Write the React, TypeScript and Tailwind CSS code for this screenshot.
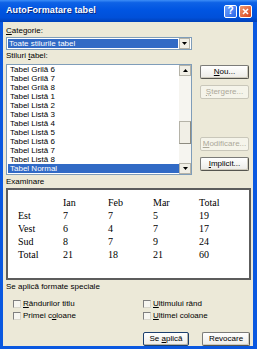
import React from "react";

const items = [
  "Tabel Grilă 6",
  "Tabel Grilă 7",
  "Tabel Grilă 8",
  "Tabel Listă 1",
  "Tabel Listă 2",
  "Tabel Listă 3",
  "Tabel Listă 4",
  "Tabel Listă 5",
  "Tabel Listă 6",
  "Tabel Listă 7",
  "Tabel Listă 8",
  "Tabel Normal",
];

const rows = [
  ["", "Ian", "Feb", "Mar", "Total"],
  ["Est", "7", "7", "5", "19"],
  ["Vest", "6", "4", "7", "17"],
  ["Sud", "8", "7", "9", "24"],
  ["Total", "21", "18", "21", "60"],
];

function Arrow({ up }: { up?: boolean }) {
  return (
    <svg width="5" height="3" viewBox="0 0 5 3" className={up ? "rotate-180" : ""}>
      <path d="M0 0h5L2.5 3z" fill="#000" />
    </svg>
  );
}

function Btn({
  children,
  disabled,
  def,
  className = "",
}: {
  children: React.ReactNode;
  disabled?: boolean;
  def?: boolean;
  className?: string;
}) {
  return (
    <div
      className={
        "h-[14px] flex items-center justify-center rounded-[2px] border leading-[10px] " +
        (disabled
          ? "border-[#c9c7ba] bg-[#f5f4ea] text-[#aca899] "
          : def
          ? "border-[#1c3f6e] bg-[linear-gradient(to_bottom,#ffffff,#ecebe6)] shadow-[inset_-1px_-1px_0_#b8b4a4] "
          : "border-[#7b7b78] border-r-[#55554f] border-b-[#55554f] bg-[linear-gradient(to_bottom,#ffffff,#ecebe6)] shadow-[inset_-1px_-1px_0_#cfcbbd] ") +
        className
      }
    >
      {children}
    </div>
  );
}

function Check({ children }: { children: React.ReactNode }) {
  return (
    <div className="flex items-center h-[12px]">
      <div className="w-[8px] h-[8px] border border-[#808080] border-r-[#d8d6cc] border-b-[#d8d6cc] bg-[#f7f6f1]" />
      <span className="ml-[2px] leading-[10px]">{children}</span>
    </div>
  );
}

export default function App() {
  return (
    <div className="w-[257px] h-[349px] bg-[#0a58e0] flex flex-col font-['Liberation_Sans',sans-serif] text-[8px] text-black overflow-hidden">
      {/* title bar */}
      <div className="h-[22px] shrink-0 flex items-center pl-[6px] pr-[5px] bg-[linear-gradient(to_bottom,#3d8ef7_0%,#0e62e6_12%,#0055e2_45%,#0050d9_80%,#0040b8_100%)]">
        <span className="flex-1 font-bold text-[9px] text-white tracking-[0.1px] [text-shadow:1px_1px_0_#0a2a80]">
          AutoFormatare tabel
        </span>
        <div className="w-[13px] h-[13px] rounded-[2px] border border-white bg-[linear-gradient(135deg,#6fa2ff,#2a66e8)] flex items-center justify-center text-white font-bold text-[10px] leading-[10px]">
          ?
        </div>
        <div className="ml-[2px] w-[13px] h-[13px] rounded-[2px] border border-white bg-[linear-gradient(135deg,#f09a70,#d8431a)] flex items-center justify-center">
          <svg width="7" height="7" viewBox="0 0 7 7">
            <path d="M1 1L6 6M6 1L1 6" stroke="#fff" strokeWidth="1.6" />
          </svg>
        </div>
      </div>

      {/* client */}
      <div className="flex-1 ml-[3px] mr-[4px] mb-[4px] bg-[#ece9d8] pl-[3px] pr-[2px] flex flex-col">
        <div className="flex">
          <div className="w-[186px] flex flex-col">
            <div className="mt-[4px] h-[10px] leading-[10px]">
              <u>C</u>ategorie:
            </div>
            <div className="mt-[1px] h-[13px] border border-[#7f9db9] bg-white flex items-center pl-[1px] pr-[1px]">
              <div className="flex-1 h-[9px] bg-[#316ac5] text-white leading-[9px] pl-[1px]">
                Toate stilurile tabel
              </div>
              <div className="ml-[1px] w-[11px] h-[11px] border border-[#b5b3a8] bg-[#f1efe6] flex items-center justify-center">
                <Arrow />
              </div>
            </div>
            <div className="mt-[1px] h-[10px] leading-[10px]">
              Stiluri <u>t</u>abel:
            </div>
            <div className="mt-[3px] h-[111px] border border-[#7f9db9] bg-white flex">
              <div className="flex-1 flex flex-col pl-[1px]">
                {items.map((it, i) => (
                  <div
                    key={it}
                    className={
                      "h-[9px] leading-[9px] pl-[2px] whitespace-nowrap " +
                      (i === items.length - 1 ? "bg-[#316ac5] text-white" : "")
                    }
                  >
                    {it}
                  </div>
                ))}
              </div>
              <div className="w-[12px] bg-[#f6f5f0] flex flex-col">
                <div className="h-[11px] border border-[#b5b3a8] bg-[#f1efe6] flex items-center justify-center">
                  <Arrow up />
                </div>
                <div className="h-[45px]" />
                <div className="h-[23px] border border-[#b5b3a8] border-r-[#8d8b80] border-b-[#8d8b80] bg-[#f1efe6]" />
                <div className="flex-1" />
                <div className="h-[11px] border border-[#b5b3a8] bg-[#f1efe6] flex items-center justify-center">
                  <Arrow />
                </div>
              </div>
            </div>
          </div>
          <div className="ml-[8px] mr-[1px] w-[49px] flex flex-col">
            <Btn className="mt-[43px]">
              <span>
                <u>N</u>ou...
              </span>
            </Btn>
            <Btn disabled className="mt-[6px]">
              <span>
                <u>Ş</u>tergere...
              </span>
            </Btn>
            <Btn disabled className="mt-[38px]">
              <span>
                <u>M</u>odificare...
              </span>
            </Btn>
            <Btn className="mt-[6px]">
              <span>
                <u>I</u>mplicit...
              </span>
            </Btn>
          </div>
        </div>

        <div className="mt-[2px] h-[10px] leading-[10px]">Examinare</div>
        <div className="mt-[1px] h-[92px] border-2 border-[#5c5c5c] bg-white pt-[6px] pl-[10px] font-['Liberation_Serif',serif] text-[10px]">
          {rows.map((r, i) => (
            <div key={i} className="grid grid-cols-[45px_45px_45px_46px_45px] h-[13px] leading-[13px]">
              {r.map((c, j) => (
                <div key={j}>{c}</div>
              ))}
            </div>
          ))}
        </div>

        <div className="mt-[2px] h-[10px] leading-[10px]">Se aplică formate speciale</div>
        <div className="mt-[6px] pl-[7px] grid grid-cols-[130px_1fr]">
          <Check>
            <u>R</u>ândurilor titlu
          </Check>
          <Check>
            <u>U</u>ltimului rând
          </Check>
          <Check>
            Primei c<u>o</u>loane
          </Check>
          <Check>
            <u>U</u>ltimei coloane
          </Check>
        </div>

        <div className="mt-[10px] flex justify-end pr-[1px]">
          <Btn def className="w-[46px]">
            <span>
              Se <u>a</u>plică
            </span>
          </Btn>
          <Btn className="ml-[13px] w-[48px]">
            <span>Revocare</span>
          </Btn>
        </div>
      </div>
    </div>
  );
}
